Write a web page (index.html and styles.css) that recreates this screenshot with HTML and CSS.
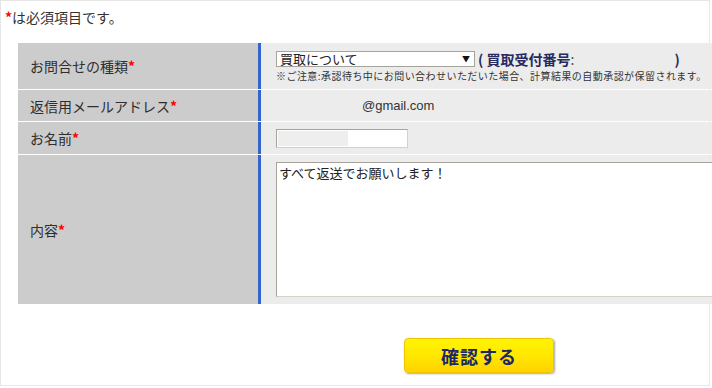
FILE: index.html
```html
<!DOCTYPE html>
<html lang="ja">
<head>
<meta charset="utf-8">
<link rel="stylesheet" href="styles.css">
</head>
<body>
<div class="page">
  <p class="note-required"><span class="req">*</span>は必須項目です。</p>
  <div class="form">
    <div class="row row-type">
      <div class="label">お問合せの種類<span class="req">*</span></div>
      <div class="value">
        <div class="line">
          <div class="select"><span>買取について</span><span class="arrow">▼</span></div>
          <span class="receipt">( 買取受付番号<span class="colon">:</span></span>
          <span class="receipt-blank"></span>
          <span class="receipt">)</span>
        </div>
        <div class="caution">※ご注意:承認待ち中にお問い合わせいただいた場合、計算結果の自動承認が保留されます。</div>
      </div>
    </div>
    <div class="row row-mail">
      <div class="label">返信用メールアドレス<span class="req">*</span></div>
      <div class="value"><span class="mail">@gmail.com</span></div>
    </div>
    <div class="row row-name">
      <div class="label">お名前<span class="req">*</span></div>
      <div class="value"><div class="input"><span class="masked"></span></div></div>
    </div>
    <div class="row row-body">
      <div class="label">内容<span class="req">*</span></div>
      <div class="value"><div class="textarea">すべて返送でお願いします！</div></div>
    </div>
  </div>
  <div class="actions">
    <button class="submit" type="button">確認する</button>
  </div>
</div>
</body>
</html>
```

FILE: styles.css
```css
html, body {
  margin: 0;
  padding: 0;
  background: #fff;
}
body {
  font-family: "Noto Sans CJK JP", "Liberation Sans", sans-serif;
  color: #333;
  overflow: hidden;
}
.page {
  width: 708px;
  height: 384px;
  border: 1px solid #e6e6e6;
  box-sizing: content-box;
}
.note-required {
  margin: 0;
  padding: 6px 0 0 4px;
  font-size: 14px;
  line-height: 20px;
  color: #333;
}
.req {
  color: #ff0000;
  font-weight: bold;
}
.form {
  margin: 16px 0 0 17px;
  width: 695px;
  display: flex;
  flex-direction: column;
  gap: 1px;
}
.row {
  display: flex;
}
.label {
  width: 228px;
  padding-left: 12px;
  background: #cccccc;
  display: flex;
  align-items: center;
  font-size: 14px;
  color: #2e2e2e;
}
.value {
  flex: 1;
  background: #ececec;
  border-left: 3px solid #3366cc;
  padding-left: 15px;
  min-width: 0;
}
.row-type { height: 46px; }
.row-mail { height: 31px; }
.row-name { height: 32px; }
.row-body { height: 149px; }

.row-type .value {
  padding-top: 8px;
  box-sizing: border-box;
}
.line {
  display: flex;
  align-items: center;
  height: 16px;
}
.select {
  width: 190px;
  height: 14px;
  border: 1px solid #a6a49a;
  background: #fff;
  display: flex;
  align-items: center;
  justify-content: space-between;
  padding-left: 3px;
  padding-right: 4px;
  box-sizing: content-box;
  font-size: 13px;
  color: #222;
  line-height: 14px;
}
.select .arrow {
  font-size: 8px;
  color: #111;
}
.receipt {
  font-size: 14px;
  font-weight: bold;
  color: #262a5e;
  margin-left: 3px;
}
.colon {
  font-weight: normal;
  color: #555;
}
.receipt-blank {
  width: 97px;
}
.caution {
  margin-top: 2px;
  font-size: 10px;
  line-height: 13px;
  letter-spacing: 0.45px;
  color: #333;
  white-space: nowrap;
}
.row-mail .value {
  display: flex;
  align-items: center;
}
.mail {
  margin-left: 86px;
  font-family: "Liberation Sans", Arial, sans-serif;
  font-size: 13px;
  color: #333;
}
.row-name .value {
  display: flex;
  align-items: center;
}
.input {
  width: 128px;
  height: 15px;
  border: 1px solid #d4d2c8;
  border-top-color: #a6a49a;
  border-left-color: #a6a49a;
  background: #fff;
  display: flex;
  padding: 1px;
}
.masked {
  width: 70px;
  background: #eeeeee;
}
.row-body .value {
  padding-top: 7px;
  padding-bottom: 7px;
  box-sizing: border-box;
  display: flex;
}
.textarea {
  flex: 1;
  border: 1px solid #a6a49a;
  border-right: none;
  border-bottom-color: #d4d2c8;
  background: #fff;
  padding: 2px 2px;
  font-size: 13px;
  line-height: 16px;
  color: #222;
}
.actions {
  display: flex;
  padding-left: 403px;
  margin-top: 34px;
}
.submit {
  width: 150px;
  height: 35px;
  border: 1px solid #f0c400;
  border-radius: 4px;
  background: linear-gradient(#fff500, #ffe800 50%, #ffd200);
  box-shadow: 1px 1px 2px rgba(0, 0, 0, 0.35);
  font-family: "Noto Sans CJK JP", sans-serif;
  font-size: 18px;
  font-weight: bold;
  color: #1c2866;
  padding: 0;
  letter-spacing: 1px;
}
```
